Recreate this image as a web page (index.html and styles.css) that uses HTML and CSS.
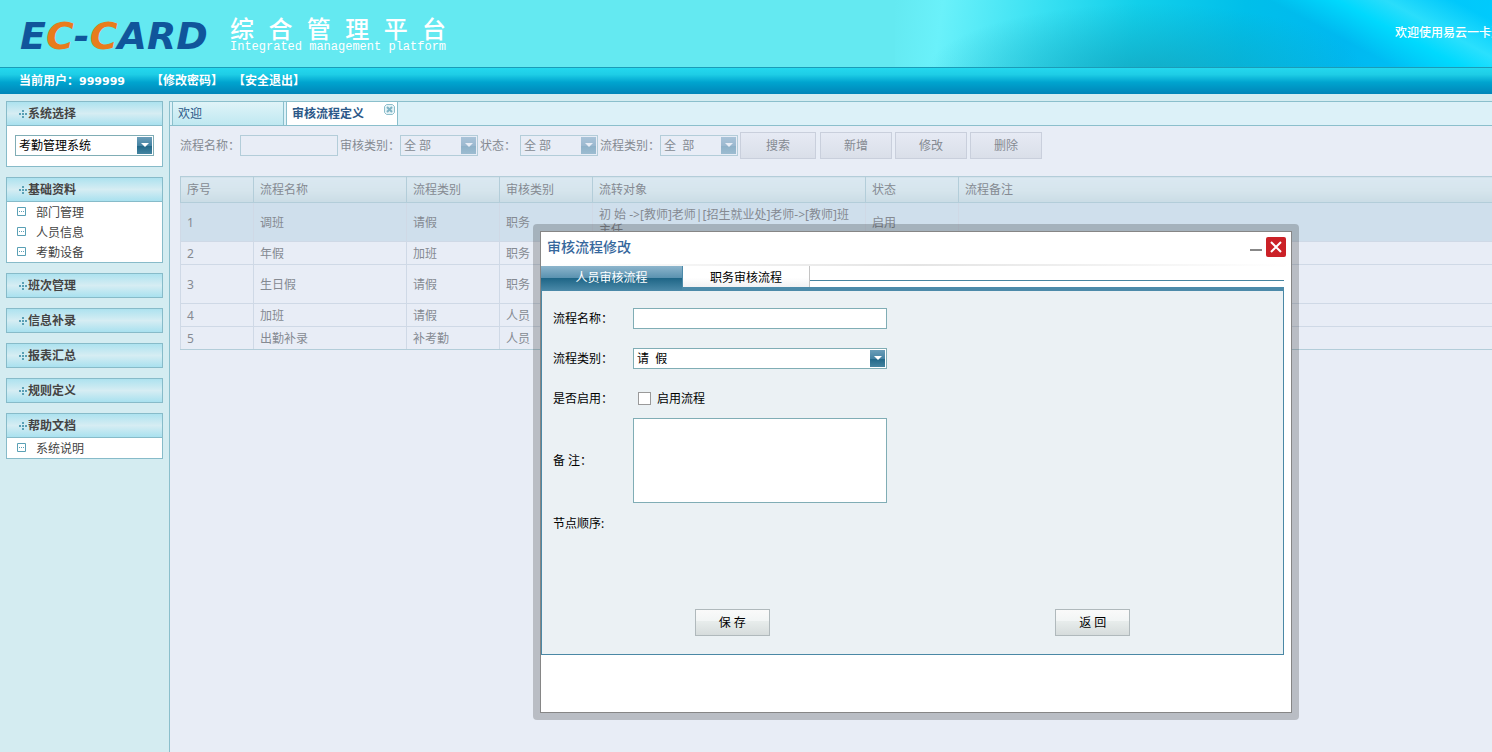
FILE: index.html
```html
<!DOCTYPE html>
<html lang="zh-CN">
<head>
<meta charset="utf-8">
<title>综合管理平台</title>
<link rel="stylesheet" href="styles.css">
</head>
<body>
<svg class="defs" aria-hidden="true">
  <symbol id="dots" viewBox="0 0 8 8">
    <path fill="#5aa0b5" d="M3 0h2v2h-2zM3 3h2v2h-2zM3 6h2v2h-2zM0 3h2v2h-2zM6 3h2v2h-2z"/>
  </symbol>
  <symbol id="leaf" viewBox="0 0 9 9">
    <path fill="none" stroke="#5aa0b5" d="M.5.5h8v8h-8z"/>
    <path fill="#5aa0b5" d="M2 4h1v1h-1zM4 4h1v1h-1zM6 4h1v1h-1z"/>
  </symbol>
</svg>

<header class="banner">
  <div class="logo">E<span class="logo-accent">C</span>-<span class="logo-accent">C</span>ARD</div>
  <div class="brand">
    <h1 class="brand-title"><span>综</span><span>合</span><span>管</span><span>理</span><span>平</span><span>台</span></h1>
    <p class="brand-sub">Integrated management platform</p>
  </div>
  <div class="welcome">欢迎使用易云一卡通</div>
</header>

<nav class="userbar">
  <span class="user">当前用户：<span class="user-id">999999</span></span>
  <a class="userlink" href="#">【修改密码】</a>
  <a class="userlink" href="#">【安全退出】</a>
</nav>

<div class="layout">
  <aside class="sidebar">
    <section class="panel">
      <h2 class="panel-head"><svg class="dots"><use href="#dots"/></svg><label for="system">系统选择</label></h2>
      <div class="panel-body">
        <div class="picker"><select id="system"><option>考勤管理系统</option></select></div>
      </div>
    </section>
    <section class="panel">
      <h2 class="panel-head"><svg class="dots"><use href="#dots"/></svg>基础资料</h2>
      <a class="item" href="#"><svg class="leaf"><use href="#leaf"/></svg>部门管理</a>
      <a class="item" href="#"><svg class="leaf"><use href="#leaf"/></svg>人员信息</a>
      <a class="item" href="#"><svg class="leaf"><use href="#leaf"/></svg>考勤设备</a>
    </section>
    <section class="panel"><h2 class="panel-head"><svg class="dots"><use href="#dots"/></svg>班次管理</h2></section>
    <section class="panel"><h2 class="panel-head"><svg class="dots"><use href="#dots"/></svg>信息补录</h2></section>
    <section class="panel"><h2 class="panel-head"><svg class="dots"><use href="#dots"/></svg>报表汇总</h2></section>
    <section class="panel"><h2 class="panel-head"><svg class="dots"><use href="#dots"/></svg>规则定义</h2></section>
    <section class="panel">
      <h2 class="panel-head"><svg class="dots"><use href="#dots"/></svg>帮助文档</h2>
      <a class="item" href="#"><svg class="leaf"><use href="#leaf"/></svg>系统说明</a>
    </section>
  </aside>

  <main class="main">
    <div class="tabs">
      <button class="tab" type="button">欢迎</button>
      <button class="tab tab-active" type="button">审核流程定义
        <svg class="tab-close" viewBox="0 0 11 11"><path fill="#e4f2f6" stroke="#8fbfcc" d="M2.5.5h6l2 2v6l-2 2h-6l-2-2v-6z"/><path stroke="#7fb3c4" stroke-width="2" d="M3 3l5 5M8 3l-5 5"/></svg>
      </button>
    </div>
    <div class="content">
      <form class="toolbar">
        <label class="tool-label" for="q-name">流程名称：</label>
        <input class="tool-input" id="q-name" type="text">
        <label class="tool-label" for="q-audit">审核类别：</label>
        <div class="picker tool-picker"><select id="q-audit"><option>全 部</option></select></div>
        <label class="tool-label tool-label-short" for="q-state">状态：</label>
        <div class="picker tool-picker"><select id="q-state"><option>全 部</option></select></div>
        <label class="tool-label" for="q-type">流程类别：</label>
        <div class="picker tool-picker"><select id="q-type"><option>全 &nbsp;部</option></select></div>
        <div class="tool-actions">
          <button class="tool-btn" type="button">搜索</button>
          <button class="tool-btn" type="button">新增</button>
          <button class="tool-btn" type="button">修改</button>
          <button class="tool-btn" type="button">删除</button>
        </div>
      </form>
      <table class="grid">
        <colgroup><col class="c-no"><col class="c-name"><col class="c-kind"><col class="c-kind"><col class="c-flow"><col class="c-kind"><col></colgroup>
        <thead>
          <tr><th>序号</th><th>流程名称</th><th>流程类别</th><th>审核类别</th><th>流转对象</th><th>状态</th><th>流程备注</th></tr>
        </thead>
        <tbody>
          <tr class="tall selected"><td>1</td><td>调班</td><td>请假</td><td>职务</td><td>初 始 -&gt;[教师]老师|[招生就业处]老师-&gt;[教师]班主任</td><td>启用</td><td></td></tr>
          <tr><td>2</td><td>年假</td><td>加班</td><td>职务</td><td></td><td></td><td></td></tr>
          <tr class="tall"><td>3</td><td>生日假</td><td>请假</td><td>职务</td><td></td><td></td><td></td></tr>
          <tr><td>4</td><td>加班</td><td>请假</td><td>人员</td><td></td><td></td><td></td></tr>
          <tr><td>5</td><td>出勤补录</td><td>补考勤</td><td>人员</td><td></td><td></td><td></td></tr>
        </tbody>
      </table>
    </div>
  </main>
</div>

<div class="dialog-frame">
  <div class="dialog" role="dialog" aria-labelledby="dialog-title">
    <div class="dialog-head">
      <h2 class="dialog-title" id="dialog-title">审核流程修改</h2>
      <button class="dialog-min" type="button" aria-label="最小化"></button>
      <button class="dialog-close" type="button" aria-label="关闭"><svg viewBox="0 0 20 20"><path stroke="#fff" stroke-width="2" d="M5 5l10 10M15 5l-10 10"/></svg></button>
    </div>
    <div class="dialog-content">
      <div class="steps">
        <button class="step step-active" type="button">人员审核流程</button>
        <button class="step" type="button">职务审核流程</button>
        <div class="steps-rest"></div>
      </div>
      <form class="sheet">
        <div class="row"><label class="row-label" for="f-name">流程名称：</label><input class="field" id="f-name" type="text"></div>
        <div class="row"><label class="row-label" for="f-type">流程类别：</label><div class="picker field"><select id="f-type"><option>请 &nbsp;假</option></select></div></div>
        <div class="row"><span class="row-label">是否启用：</span><label class="check"><input type="checkbox">启用流程</label></div>
        <div class="row row-area"><label class="row-label" for="f-note">备 注：</label><textarea class="field area" id="f-note"></textarea></div>
        <div class="row"><span class="row-label">节点顺序:</span></div>
        <div class="actions">
          <button class="btn" type="button">保 存</button>
          <button class="btn" type="button">返 回</button>
        </div>
      </form>
    </div>
  </div>
</div>
</body>
</html>
```
FILE: styles.css
```css
* { box-sizing: border-box; }

body {
  margin: 0;
  min-height: 100vh;
  display: flex;
  flex-direction: column;
  position: relative;
  overflow: hidden;
  background: #d4ecf1;
  color: #444;
  font: 12px/16px "Noto Sans", "Noto Sans CJK SC", sans-serif;
}

h1, h2, p { margin: 0; font-size: inherit; font-weight: normal; }
a { color: inherit; text-decoration: none; }
button, input, select, textarea { font: inherit; color: inherit; margin: 0; border-radius: 0; }
.defs { position: absolute; width: 0; height: 0; }

/* Banner */
.banner {
  display: flex;
  height: 68px;
  padding-left: 20px;
  border-bottom: 1px solid #1a9cb8;
  color: #fff;
  background:
    linear-gradient(28deg, transparent 54%, rgba(0, 220, 255, .9) 68%, rgba(60, 235, 255, .7) 78%, rgba(0, 205, 255, .5) 92%) right / 360px 100% no-repeat,
    radial-gradient(ellipse 220px 70px at 42% 110%, rgba(20, 160, 185, .7), transparent) right / 597px 100% no-repeat,
    linear-gradient(98deg, #64e9f1 0%, #6af1fa 8%, #38e0f2 25%, #12cfea 40%, #00bfea 58%, #00b8f0 75%, #00c8fa 100%) right / 597px 100% no-repeat,
    #64e9f1;
}
.logo {
  width: 210px;
  padding-top: 14px;
  color: #10559b;
  font: italic bold 38px/44px "DejaVu Sans", sans-serif;
}
.logo-accent { color: #e87c1c; }
.brand { padding-top: 16px; white-space: nowrap; }
.brand-title { display: flex; justify-content: space-between; font: 500 24px/24px "Noto Sans CJK SC", sans-serif; }
.brand-sub { font: 12px/14px "Liberation Mono", monospace; }
.welcome {
  width: 97px;
  margin-left: auto;
  padding-top: 25px;
  overflow: hidden;
  white-space: nowrap;
  font-weight: 500;
}

.userbar {
  display: flex;
  height: 26px;
  padding-left: 19px;
  align-items: center;
  color: #fff;
  font-weight: bold;
  background: linear-gradient(#24d8ee, #1ecde6 25%, #00a4cf 55%, #0085b8);
}
.user { width: 132px; }
.user-id { font: bold 11px/16px "DejaVu Sans", sans-serif; }
.userlink { width: 82px; }

/* Layout */
.layout { flex: 1; display: flex; padding-top: 7px; }
.sidebar {
  width: 169px;
  padding: 0 6px;
  display: flex;
  flex-direction: column;
  gap: 10px;
}
.panel { border: 1px solid #87bbc9; background: #fff; }
.panel-head {
  display: flex;
  align-items: center;
  height: 23px;
  padding-left: 12px;
  gap: 1px;
  font-weight: bold;
  background: linear-gradient(#ade2ef, #d6edf3 50%, #a9e1ef);
}
.panel-head:not(:last-child) { height: 24px; border-bottom: 1px solid #87bbc9; }
.dots { width: 8px; height: 8px; }
.panel-body { padding: 9px 8px 10px; }
.item { display: flex; height: 20px; padding: 3px 0 1px 10px; gap: 10px; }
.leaf { width: 9px; height: 9px; margin-top: 2px; }

/* Drop-down with a painted arrow button */
.picker { position: relative; height: 21px; color: #000; }
.picker select {
  display: block;
  width: 100%;
  height: 100%;
  padding: 1px 20px 0 3px;
  border: 1px solid #80adb5;
  background: #fff;
  appearance: none;
}
.picker::before {
  content: "";
  position: absolute;
  top: 2px;
  right: 2px;
  width: 15px;
  height: 17px;
  background: linear-gradient(#6a9db8, #4683a3 50%, #1f6687 50%, #4484a0);
  pointer-events: none;
}
.picker::after {
  content: "";
  position: absolute;
  top: 8px;
  right: 5px;
  border: 4px solid transparent;
  border-top-color: #fff;
  border-bottom: 0;
  pointer-events: none;
}

/* Workspace */
.main {
  flex: 1;
  min-width: 0;
  overflow: hidden;
  display: flex;
  flex-direction: column;
  border: solid #8bbfcc;
  border-width: 1px 0 0 1px;
}
.tabs {
  display: flex;
  gap: 2px;
  height: 24px;
  padding-left: 2px;
  border-bottom: 1px solid #8bbfcc;
  background: #dcf1f8;
}
.tab {
  position: relative;
  width: 112px;
  padding: 1px 5px 0;
  border: solid #8bbfcc;
  border-width: 0 1px;
  text-align: left;
  color: #2c5888;
  background: linear-gradient(#e0f4f8, #bfe8f1);
}
.tab-active { font-weight: bold; background: #fff; }
.tab-close { position: absolute; top: 2px; right: 2px; width: 11px; height: 11px; }

.content { flex: 1; padding-left: 10px; background: #e8edf6; color: #858a92; }
.toolbar { display: flex; align-items: center; padding: 6px 0 17px; }
.tool-label { width: 60px; padding-top: 1px; white-space: nowrap; }
.tool-label-short { width: 40px; }
.tool-input {
  width: 98px;
  height: 21px;
  margin-right: 2px;
  border: 1px solid #b3cdd9;
  background: #e8edf6;
}
.tool-picker { width: 78px; margin-right: 2px; color: inherit; }
.tool-picker select { border-color: #b3cdd9; background: #e8edf6; }
.tool-picker::before { background: linear-gradient(#a9c3d8, #9cb9d0 50%, #8db0c8 50%, #9cbcd0); }
.tool-picker::after { border-top-color: #e8edf6; }
.tool-actions { display: flex; gap: 3px; }
.tool-btn {
  width: 72px;
  height: 27px;
  padding: 0;
  border: 1px solid #c9cfdc;
  background: linear-gradient(#e6eaf4, #dadfe9);
}
.tool-btn:first-child { width: 76px; margin-right: 1px; }

.grid {
  width: calc(100% + 10px);
  table-layout: fixed;
  border-collapse: collapse;
  border: 1px solid #b3cdd9;
  line-height: 15px;
}
.grid th, .grid td { height: 23px; padding: 0 6px; text-align: left; font-weight: normal; border: 1px solid #cfd9e6; }
.grid th { height: 26px; border-color: #b3cdd9; background: linear-gradient(#dae8f1, #d6e5ed 50%, #cadce5); }
.grid .tall td { height: 39px; }
.grid .selected td { background: #cfdfec; }
.grid tr:last-child td { border-bottom-color: #b3cdd9; }
.c-no { width: 73px; }
.c-name { width: 153px; }
.c-kind { width: 93px; }
.c-flow { width: 273px; }

/* Dialog */
.dialog-frame {
  position: absolute;
  top: 224px;
  left: 533px;
  width: 766px;
  padding: 7px;
  border-radius: 4px;
  background: rgba(0, 0, 0, .2);
}
.dialog { padding-bottom: 57px; border: 1px solid #868686; background: #fff; color: #000; }
.dialog-head {
  display: flex;
  align-items: center;
  height: 34px;
  padding: 0 5px 2px 6px;
  border-bottom: 2px solid;
  border-image: linear-gradient(90deg, #fff, #e4e4e4 50%, #fff) 1;
}
.dialog-title { flex: 1; color: #36679c; font-size: 14px; font-weight: 500; line-height: 20px; }
.dialog-min { width: 12px; height: 2px; margin: 6px 4px 0 0; padding: 0; border: 0; background: #888; }
.dialog-close { width: 20px; height: 20px; padding: 0; border: 0; border-radius: 2px; background: #cb2127; }
.dialog-close svg { display: block; }
.dialog-content { margin-right: 7px; }

.steps { display: flex; height: 25px; border-bottom: 4px solid #4c8aa9; }
.step {
  width: 127px;
  padding: 2px 0 0;
  border: 0;
  border-right: 1px solid #c4c4c4;
  background: linear-gradient(#fff 55%, #f1f1f3);
}
.step-active {
  width: 142px;
  height: 25px;
  padding: 0 0 2px;
  border-right-color: #4c8aa9;
  color: #fff;
  background: linear-gradient(#8db5cc, #5a92b0 48%, #1f6687 50%, #4c8aa9);
}
.steps-rest { flex: 1; height: 15px; border-bottom: 1px solid #47849f; }

.sheet {
  padding: 7px 10px 18px;
  border: 1px solid #4a88a5;
  border-top: 0;
  background: #ebf1f4;
}
.row { display: flex; align-items: center; height: 40px; padding-left: 1px; }
.row-area { height: 85px; }
.row-label { width: 80px; padding-top: 1px; white-space: nowrap; }
.field { width: 254px; height: 21px; }
input.field, .area { border: 1px solid #80adb5; background: #fff; }
.area { height: 85px; resize: none; }
.check { display: flex; align-items: center; gap: 6px; padding: 1px 0 0 5px; }
.check input { appearance: none; width: 13px; height: 13px; border: 1px solid #9a9a9a; background: #fff; }
.actions { display: grid; grid-template-columns: 1fr 1fr; justify-items: center; margin-top: 66px; }
.btn {
  width: 75px;
  height: 27px;
  padding: 0;
  border: 1px solid #b0b9bc;
  background: linear-gradient(#fafafa, #f2f5f5 42%, #e8edec 44%, #d6dcdc);
}
```
